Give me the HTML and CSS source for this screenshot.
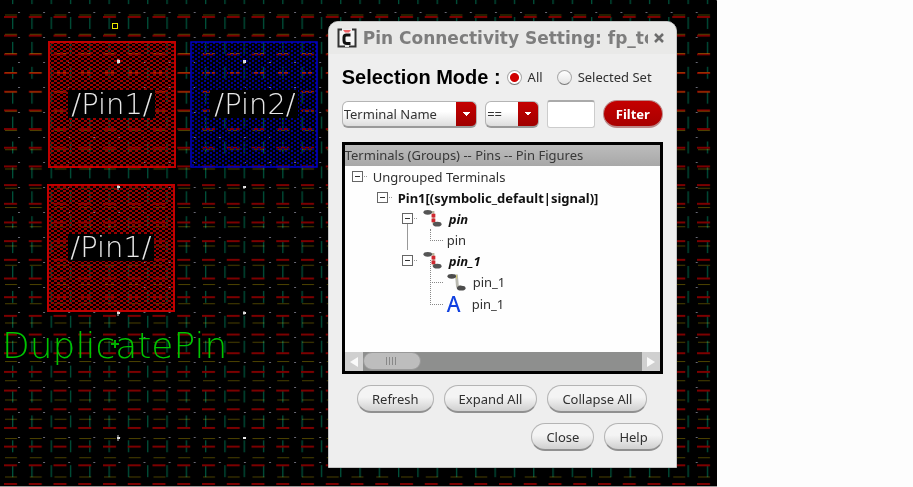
FILE: index.html
```
<!DOCTYPE html>
<html lang="en">
<head>
<meta charset="utf-8">
<title>Pin Connectivity Setting</title>
<link rel="stylesheet" href="styles.css">
</head>
<body>
<main class="workspace">
  <svg class="layout-canvas" aria-label="Layout canvas">
    <defs>
      <pattern id="track-red" x="4" y="16" width="24.75" height="18.68" patternUnits="userSpaceOnUse">
        <rect width="13" height="2" fill="#7c0000"/>
      </pattern>
      <pattern id="track-olive" x="5" y="14.5" width="24.75" height="19.25" patternUnits="userSpaceOnUse">
        <rect width="12" height="1" fill="#4a4000"/>
      </pattern>
      <pattern id="track-green" x="12" y="17" width="19.3" height="24.9" patternUnits="userSpaceOnUse">
        <rect width="1.3" height="12" fill="#00513a"/>
      </pattern>
      <pattern id="grid-minor" x="18" y="12" width="25.1" height="25" patternUnits="userSpaceOnUse">
        <rect width="2" height="1" fill="#686874"/>
      </pattern>
      <pattern id="stipple-red" width="6" height="4" patternUnits="userSpaceOnUse">
        <path d="M0 0h3v2h-3zM3 2h3v2h-3z" fill="#980000"/>
      </pattern>
      <pattern id="stipple-blue" width="6" height="4" patternUnits="userSpaceOnUse">
        <path d="M0 0h2v2h-2zM3 2h2v2h-2z" fill="#000090"/>
      </pattern>
    </defs>
    <rect width="100%" height="100%" fill="#000"/>
    <rect width="100%" height="100%" fill="url(#track-green)"/>
    <rect width="100%" height="100%" fill="url(#track-red)"/>
    <rect class="blend" width="100%" height="100%" fill="url(#track-olive)"/>
    <rect width="100%" height="100%" fill="url(#grid-minor)"/>
    <rect x="49" y="42" width="126" height="125" fill="url(#stipple-red)" stroke="#c00000" stroke-width="2"/>
    <rect x="191" y="42" width="126" height="125" fill="url(#stipple-blue)" stroke="#0000c8" stroke-width="1.500"/>
    <rect x="48" y="185" width="126" height="126" fill="url(#stipple-red)" stroke="#c00000" stroke-width="2"/>
    <rect x="68" y="90" width="87" height="28"/>
    <rect x="210" y="90" width="88" height="28"/>
    <rect x="68" y="234" width="86" height="27"/>
    <text class="pin-label" x="112" y="114">/Pin1/</text>
    <text class="pin-label" x="255" y="114">/Pin2/</text>
    <text class="pin-label" x="111" y="257">/Pin1/</text>
    <text class="net-label" x="2" y="358">DuplicatePin</text>
    <rect x="112.500" y="23.500" width="5" height="5" fill="#000" stroke="#e8e800"/>
    <path d="M117 60h3v3h-3zM243 60h3v3h-3zM117 186h3v2h-3zM243 186h3v2h-3zM117 312h3v2h-3zM243 312h3v2h-3zM117 437h3v2h-3zM243 437h3v2h-3z" fill="#e8e8e8"/>
    <path d="M118 59v5M244 60v4M118 185v5M244 186v3M118 311v5M244 311v4M118 435v6" stroke="#ccc"/>
    <path d="M111 344h8M115 340v8" stroke="#00b000" stroke-width="2"/>
  </svg>

  <form class="dialog">
    <header class="titlebar">
      <svg class="app-icon" viewBox="0 0 20 20" aria-hidden="true">
        <path d="M5 1.500H1.500v17H18.500v-17H15" fill="#f6f6f6" stroke="#333" stroke-width="2"/>
        <path d="M8 17.500h4" stroke="#e9e9e8" stroke-width="3"/>
        <path d="M13.500 7H9.500Q7 7 7 9.500v3Q7 15.500 10 15.500h3.500" fill="none" stroke="#111" stroke-width="3"/>
        <path d="M6 2h8l-2 2.500H8z" fill="#f06468"/>
      </svg>
      <h1 class="title">Pin Connectivity Setting: fp_to</h1>
      <button type="button" class="close-x" aria-label="Close window"><svg viewBox="0 0 10 10" aria-hidden="true"><path d="M1 1l8 8M9 1l-8 8"/></svg></button>
    </header>

    <fieldset class="mode">
      <legend class="mode-title">Selection Mode :</legend>
      <label class="choice"><input type="radio" name="mode" checked>All</label>
      <label class="choice"><input type="radio" name="mode">Selected Set</label>
    </fieldset>

    <div class="filters">
      <select class="picker picker-field" aria-label="Field"><option>Terminal Name</option></select>
      <select class="picker picker-op" aria-label="Operator"><option>==</option></select>
      <input class="value" type="text" aria-label="Value">
      <button type="button" class="btn filter-btn">Filter</button>
    </div>

    <section class="tree-panel">
      <h2 class="tree-head">Terminals (Groups) -- Pins -- Pin Figures</h2>
      <ul class="tree">
        <li>
          <div class="node"><span class="toggle"></span>Ungrouped Terminals</div>
          <ul>
            <li>
              <div class="node strong"><span class="toggle"></span>Pin1[(symbolic_default|signal)]</div>
              <ul class="pins">
                <li>
                  <div class="node pin"><span class="toggle"></span><svg class="pin-icon" viewBox="0 0 20 20"><path d="M5 3h6v12h4" fill="none" stroke="#b8b39a" stroke-width="2"/><path d="M11 5v9" stroke="#d02830" stroke-width="4" stroke-dasharray="4 1"/><ellipse cx="5" cy="3.500" rx="4.500" ry="2.500" fill="#555"/><ellipse cx="15" cy="16" rx="4.500" ry="2.500" fill="#555"/></svg>pin</div>
                  <ul class="figures"><li class="node leaf last">pin</li></ul>
                </li>
                <li>
                  <div class="node pin"><span class="toggle"></span><svg class="pin-icon" viewBox="0 0 20 20"><path d="M5 3h6v12h4" fill="none" stroke="#b8b39a" stroke-width="2"/><path d="M11 5v9" stroke="#d02830" stroke-width="4" stroke-dasharray="4 1"/><ellipse cx="5" cy="3.500" rx="4.500" ry="2.500" fill="#555"/><ellipse cx="15" cy="16" rx="4.500" ry="2.500" fill="#555"/></svg>pin_1</div>
                  <ul class="figures tall">
                    <li class="node leaf"><svg class="pin-icon" viewBox="0 0 20 20"><path d="M7 3h3l1 11h4" fill="none" stroke="#b9b9b0" stroke-width="3"/><path d="M10 2v4" stroke="#d8cf70"/><ellipse cx="5" cy="3.500" rx="4.500" ry="2.500" fill="#4c4c4c"/><ellipse cx="15" cy="16" rx="4.500" ry="2.500" fill="#4c4c4c"/></svg>pin_1</li>
                    <li class="node leaf last"><span class="text-icon">A</span>pin_1</li>
                  </ul>
                </li>
              </ul>
            </li>
          </ul>
        </li>
      </ul>
      <div class="scroll">
        <button type="button" class="arrow" aria-label="Scroll left"><svg viewBox="0 0 10 10"><path d="M9 0v10L1 5z"/></svg></button>
        <div class="track"><div class="thumb"></div></div>
        <button type="button" class="arrow" aria-label="Scroll right"><svg viewBox="0 0 10 10"><path d="M1 0v10l8-5z"/></svg></button>
      </div>
    </section>

    <div class="actions">
      <button type="button" class="btn">Refresh</button>
      <button type="button" class="btn">Expand All</button>
      <button type="button" class="btn">Collapse All</button>
    </div>
    <div class="actions closing">
      <button type="button" class="btn">Close</button>
      <button type="button" class="btn">Help</button>
    </div>
  </form>
</main>
</body>
</html>
```
FILE: styles.css
```
* { box-sizing: border-box; }

body {
  margin: 0;
  background: #fdfdfd;
  color: #303030;
  font: 13px/20px "Noto Sans", "Open Sans", sans-serif;
}

.workspace {
  position: relative;
  display: flex;
  width: 78.5%;
  height: 100vh;
  background: #000;
  border-top: 1px solid #999;
  border-bottom: 1px solid #999;
}

.layout-canvas { flex: 1; min-width: 0; height: 100%; margin-top: -1px; }
.blend { mix-blend-mode: screen; }

.pin-label, .net-label { font-family: "DejaVu Sans", sans-serif; font-weight: 200; }
.pin-label { font-size: 29px; fill: #e8e8e8; text-anchor: middle; }
.net-label { font-size: 36px; fill: #00c400; }

.dialog {
  position: absolute;
  top: 20px;
  right: 40px;
  width: 349px;
  padding: 0 13px 16px;
  background: #eeeeee;
  border: 1px solid #c4c4c4;
  border-radius: 10px 10px 0 0;
}

.titlebar {
  display: flex;
  align-items: center;
  gap: 6px;
  height: 32px;
  margin: 0 -13px;
  padding: 0 12px 0 8px;
  background: #e9e9e8;
  border-radius: 9px 9px 0 0;
}
.app-icon { flex: none; width: 20px; height: 20px; }
.title {
  flex: 1;
  min-width: 0;
  margin: 0;
  overflow: hidden;
  white-space: nowrap;
  color: #7d7d7d;
  font: bold 17px/28px "DejaVu Sans", sans-serif;
}
.close-x { width: 10px; height: 10px; padding: 0; border: 0; background: none; }
.close-x svg { display: block; stroke: #6c6c6c; stroke-width: 2.500; }

.mode { display: flex; align-items: center; gap: 14px; height: 46px; margin: 0; padding: 0; border: 0; }
.mode-title { float: left; padding: 0; margin-right: -8px; color: #000; font: bold 20px/24px "Liberation Sans", sans-serif; }
.choice { display: flex; align-items: center; gap: 6px; white-space: nowrap; }
.choice input {
  appearance: none;
  width: 15px;
  height: 15px;
  margin: 0;
  border: 1px solid #aaa;
  border-bottom-color: #777;
  border-radius: 50%;
  background: linear-gradient(#fff, #e4e4e4);
}
.choice input:checked { background: radial-gradient(circle, #d00000 0 4px, #fff 5px); }

.filters { display: flex; align-items: center; gap: 8px; height: 28px; }
.picker {
  appearance: none;
  height: 27px;
  padding: 0 24px 0 1px;
  border: 1px solid #b4b4b4;
  border-bottom: 2px solid #999;
  border-radius: 6px;
  color: #333;
  font: inherit;
  background:
    conic-gradient(from -45deg at 50% 100%, #fff 90deg, transparent 0) right 6px center / 8px 4px no-repeat,
    linear-gradient(#c40000, #a00000) right / 20px 100% no-repeat,
    linear-gradient(#fff 40%, #ddd);
}
.picker-field { width: 136px; }
.picker-op { width: 54px; }
.value { width: 48px; height: 28px; border: 1px solid #ccc; border-top: 2px solid #aaa; border-radius: 3px; background: #fff; }

.btn {
  height: 28px;
  padding: 0 14px;
  border: 1px solid #b4b4b4;
  border-bottom: 2px solid #909090;
  border-radius: 14px;
  background: linear-gradient(#f4f4f4 45%, #d0d0d0);
  color: #303030;
  font: inherit;
}
.filter-btn { width: 60px; padding: 0; border-color: #b88; background: linear-gradient(#c40000, #a80000); color: #fff; font-weight: bold; }

.tree-panel { margin-top: 14px; border: 3px solid #000; background: #fefefe; }
.tree-head { margin: 0; height: 21px; font-weight: normal; font-size: 13px; line-height: 21px; color: #383838; background: linear-gradient(#bcbcbc, #a8a8a8); }
.tree, .tree ul { margin: 0; padding: 0; list-style: none; }
.tree { height: 186px; padding-left: 7px; }
.tree ul { padding-left: 25px; }
.tree .figures { padding-left: 28px; }
.node { display: flex; align-items: center; height: 21px; white-space: nowrap; }
.strong { font-weight: bold; color: #111; }
.pin { font-weight: bold; font-style: italic; color: #111; }
.toggle {
  flex: none;
  width: 21px;
  height: 11px;
  background:
    linear-gradient(#333, #333) 3px 5px / 5px 1px no-repeat,
    linear-gradient(#666, #666) 0 0 / 11px 1px no-repeat,
    linear-gradient(#666, #666) 0 10px / 11px 1px no-repeat,
    linear-gradient(#666, #666) 0 0 / 1px 11px no-repeat,
    linear-gradient(#666, #666) 10px 0 / 1px 11px no-repeat,
    repeating-linear-gradient(90deg, #999 0 1px, transparent 1px 2px) 12px 5px / 4px 1px no-repeat;
}
.pin-icon { flex: none; width: 19px; height: 19px; margin-right: 7px; }
.pins > li:first-child { background: linear-gradient(#999, #999) 5px 16px / 1px 26px no-repeat; }
.leaf::before { content: ""; width: 12px; height: 11px; margin: -10px 4px 0 0; border: dotted #888; border-width: 0 0 1px 1px; }
.tall .node { height: 22px; }
.tall .leaf::before { height: 22px; margin-top: -22px; }
.text-icon { width: 19px; margin-right: 6px; color: #1040e0; font: 500 21px/22px "Noto Sans", sans-serif; }

.scroll { display: flex; height: 19px; background: #dedede; }
.arrow { width: 18px; padding: 4px; border: 0; background: #d0d0d0; }
.arrow svg { display: block; width: 10px; fill: #fafafa; }
.track { flex: 1; background: #8e8f8e; }
.thumb {
  width: 58px;
  height: 18px;
  border: 1px solid #999;
  border-radius: 9px;
  background: repeating-linear-gradient(90deg, #888 0 1px, transparent 1px 3px) center / 11px 8px no-repeat, #bdbdbd;
}

.actions { display: flex; justify-content: center; gap: 10px; margin-top: 11px; }
.closing { justify-content: flex-end; margin-top: 10px; }
```
